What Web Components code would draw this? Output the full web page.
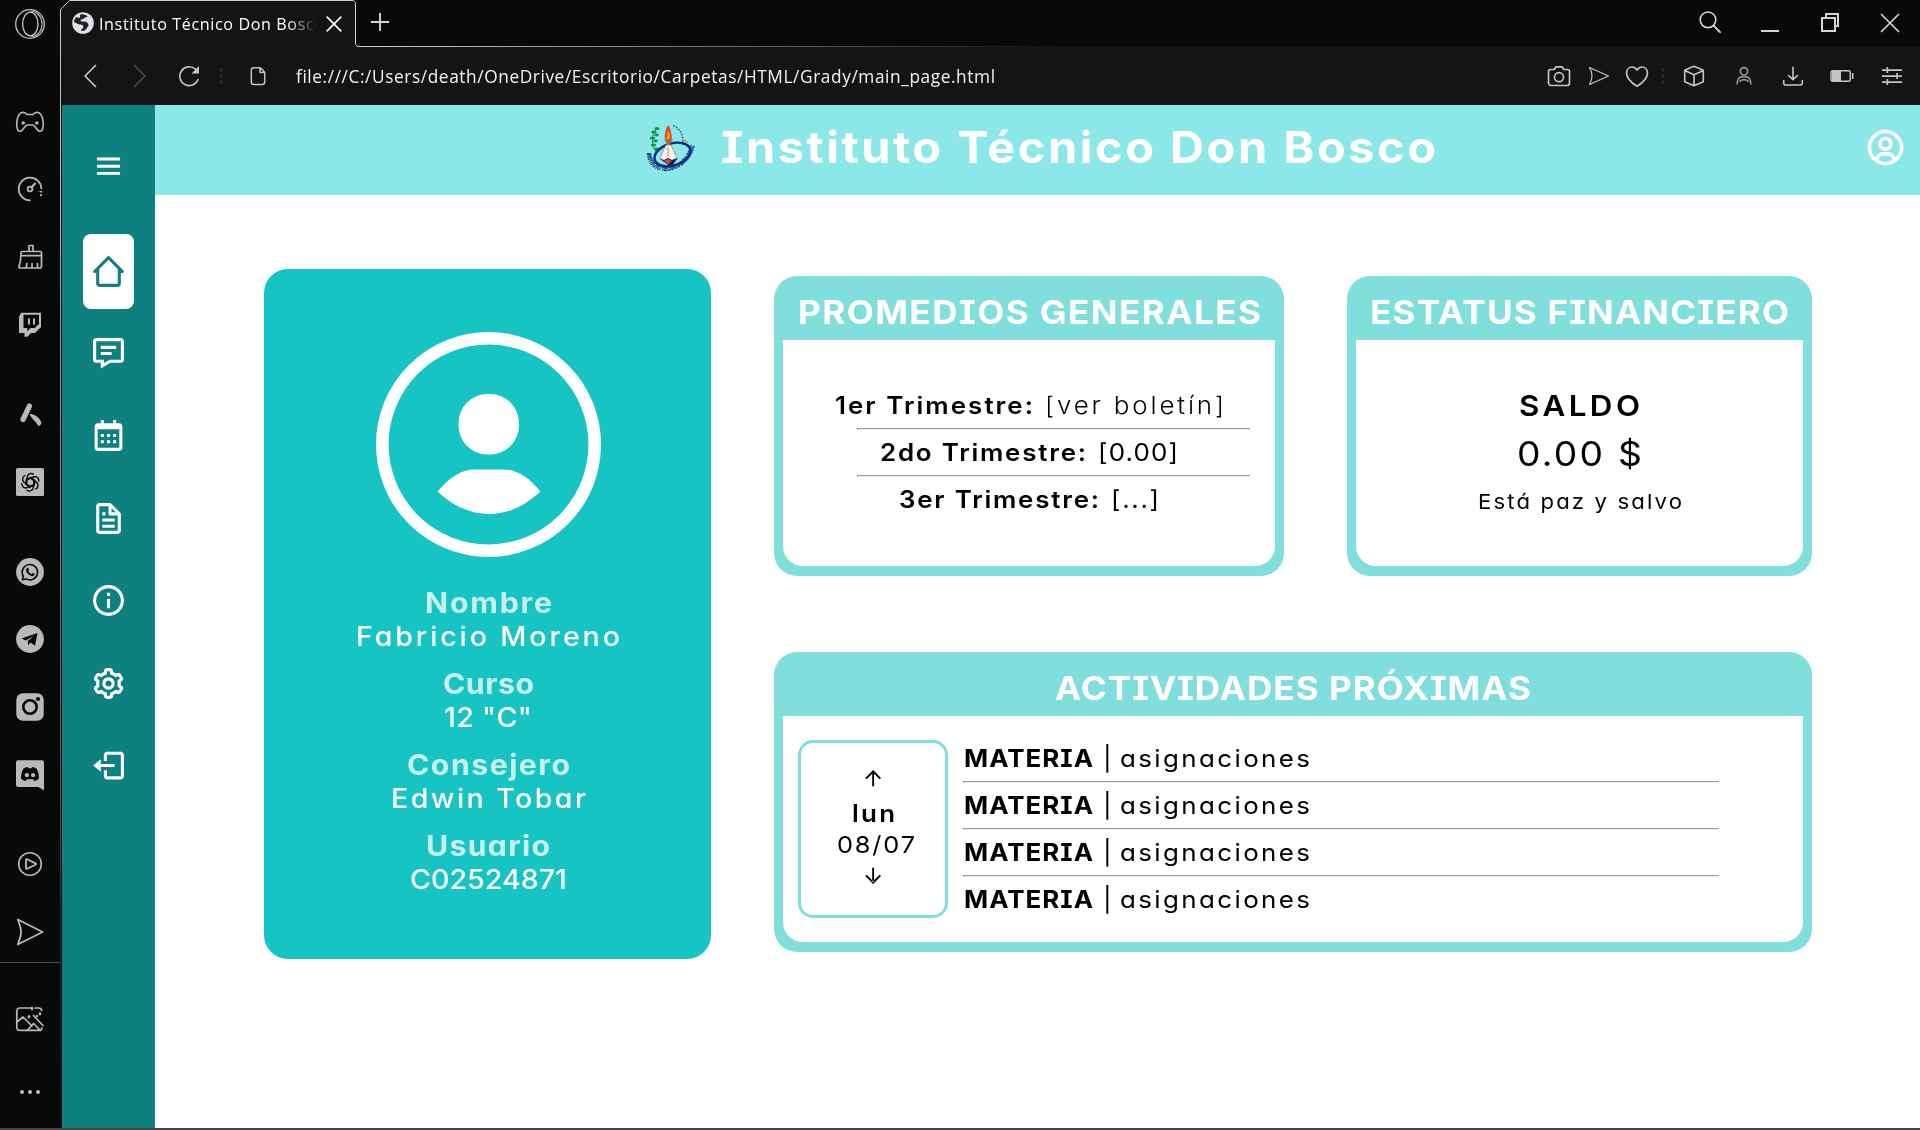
<!DOCTYPE html>
<html lang="es">
<head>
<meta charset="utf-8">
<title>Instituto Técnico Don Bosco</title>
<style>
html,body{margin:0;height:100%;overflow:hidden;background:#fff;font-family:Inter,"Open Sans",sans-serif}
</style>
</head>
<body>
<browser-window>
  <app-shell>
    <profile-card></profile-card>
    <info-card class="avg" heading="PROMEDIOS GENERALES" hw="463"><grade-list></grade-list></info-card>
    <info-card class="fin" heading="ESTATUS FINANCIERO" hw="419"><balance-box></balance-box></info-card>
    <info-card class="act" heading="ACTIVIDADES PRÓXIMAS" hw="476"><activity-board></activity-board></info-card>
  </app-shell>
</browser-window>
<script>
const G = '#c4c4c4', B = '#090909';
const line = (d, w = 1.6, c = 'currentColor') => `<path d="${d}" fill="none" stroke="${c}" stroke-width="${w}" stroke-linejoin="round" stroke-linecap="round"/>`;
const fill = (d, c = 'currentColor') => `<path d="${d}" fill="${c}"/>`;
const petal = Array.from({length: 6}, (_, i) => `<path transform="rotate(${i * 60 + 8} 16 16)" d="M12.3 13.6V10.4A3.9 3.9 0 0 1 18.4 7.9M12.3 13.6L16 11.8L20.2 14.2V19" fill="none" stroke="${B}" stroke-width="1.4"/>`).join('');

/* name: [grid size, markup] */
const ICONS = {
  opera: [32, `<circle cx="16" cy="16" r="14.3" fill="none" stroke="${G}" stroke-width="1.3"/><ellipse cx="16.3" cy="16" rx="7.7" ry="11.8" fill="none" stroke="${G}" stroke-width="1.3"/><path d="M16.5 4.2C20.5 1.8 28 7.500 28 16s-7.500 14.200-11.500 11.800" fill="none" stroke="${G}" stroke-width="1.1"/>`],
  gamepad: [32, line('M7 6.800C9 6 11.500 6.300 13 8.500h6C20.500 6.300 23 6 25 6.800 27.500 8 29.300 13 29.300 18c0 4.500-1 7.500-3.300 7.300-3.300 0-4.500-6.300-7.500-6.300h-5C10.500 19 9.300 25.300 6 25.300 3.700 25.500 2.700 22.500 2.700 18 2.700 13 4.500 8 7 6.800Z') + '<circle cx="9.200" cy="17" r="1.800" fill="currentColor"/><circle cx="22.800" cy="17" r="1.800" fill="currentColor"/>'],
  gauge: [32, line('M16 27.300A11.300 11.300 0 1 1 27.300 15.500', 1.700) + line('M17.500 14.500L21 10.500', 2) + '<circle cx="16" cy="16" r="2.400" fill="none" stroke="currentColor" stroke-width="1.700"/>' + fill('M26 18h2v1.600h-2zM26 21.300h2v1.600h-2zM24.500 18h1v1h-1z')],
  broom: [32, line('M15 10V4.500h4V10M8 10.500h18.500a1 1 0 0 1 1 1V25a2 2 0 0 1-2 2H6.200c-1 0-1.500-.5-1.200-1.500 1.500-4 2-9 2-14a1 1 0 0 1 1-1ZM7.500 14.700h19.500M12 26.500l1-4M18 26.500v-4M23.500 26.500v-4', 1.700)],
  twitch: [32, fill('M7 4.700h20V19l-6 6h-4l-3.500 3.800h-3V25H5V9zM9.500 6.700V20h3.800v3.200l3.200-3.200h4.200l4.300-4V6.700z') + fill('M14 10.500h2v6h-2zM19 10.500h2v6h-2z')],
  aria: [32, line('M15.500 8L9 21.500', 5.200) + fill('M15.500 16c4 0 10 2.500 11.800 8.500.3 1.500-1.500 3.500-3 3.500C22 23 17.500 21 15.500 16Z')],
  openai: [32, `<rect x="2" y="2" width="28" height="28" rx="1.500" fill="currentColor"/><g transform="translate(.3 .3)">${petal}</g>`],
  whatsapp: [32, '<circle cx="16" cy="16" r="13.900" fill="currentColor"/>' + line('M8.300 23.800l1-3.600a7.700 7.700 0 1 1 2.800 2.700z', 1.500, B) + fill('M13.200 12c.6-.5 1-.3 1.300.4l.6 1.400-.8 1.100c.8 1.500 1.700 2.300 3.200 3l1.100-1 1.800.9c.4.300.300.800 0 1.300-.8 1.200-2.200 1.300-4 .5-2.200-1-3.500-2.500-4.200-4.400-.4-1.400 0-2.400 1-3.200z', B)],
  telegram: [32, '<circle cx="16" cy="16" r="13.900" fill="currentColor"/>' + fill('M7.500 15.500L23.500 10 21 22.800l-4.500-3.200-2.300 2.600-.4-4.200 6.500-5.600-8.500 5z', B)],
  instagram: [32, `<rect x="2.300" y="2.300" width="27.400" height="27.400" rx="6.500" fill="currentColor"/><circle cx="16" cy="16" r="6.700" fill="none" stroke="${B}" stroke-width="2.600"/><circle cx="24" cy="8" r="2.100" fill="${B}"/>`],
  discord: [32, fill('M4 1.200h24a2 2 0 0 1 2 2V31.500l-5.500-3.500H4a2 2 0 0 1-2-2V3.200a2 2 0 0 1 2-2z') + fill('M7 19.500c0-4 1-7.500 2.300-9.800 1.600-1 3-1.500 4.400-1.600l.8 1.200h3l.8-1.200c1.400.1 2.800.6 4.400 1.600C24 12 25 15.500 25 19.500c-1.500 1.600-3.200 2.300-4.800 2.500l-1-1.700h-6.400l-1 1.700c-1.600-.2-3.300-.9-4.800-2.500z', B) + '<circle cx="12.900" cy="16.200" r="2.100" fill="currentColor"/><circle cx="19.100" cy="16.200" r="2.100" fill="currentColor"/>'],
  play: [32, '<circle cx="16" cy="16" r="11.300" fill="none" stroke="currentColor" stroke-width="1.600"/>' + line('M12 11.800v8.400c0 .6.500.8 1 .6l8.500-4.100c.6-.3.6-1 0-1.300L13 11.200c-.5-.2-1 0-1 .6Z', 1.800)],
  flow: [32, line('M3.800 3.500L28.500 16 3.800 28.500C6 23 7 19.500 7 16S6 9 3.800 3.500Z', 1.800)],
  picture: [32, line('M17 5H5.500A2.700 2.700 0 0 0 2.800 7.700v17a2.700 2.700 0 0 0 2.700 2.700h19.800a2.500 2.500 0 0 0 2.500-2.500M3 19l6-5 9 9M13.500 27l6-6.500 5.500 5.500M21 5h3.500c1.800 0 3 1 3.200 2.500M19.500 12.500L29 22.500', 1.700) + fill('M18 3l1.500 2.500L18 8l-1.500-2.500zM15 11.500l1.500 2.200-1.500 2.200-1.500-2.200zM26 8.500l1.500 2.200L26 13l-1.500-2.300zM22 12h2v2h-2z')],
  dots: [32, '<circle cx="8" cy="16" r="2.100" fill="currentColor"/><circle cx="16" cy="16" r="2.100" fill="currentColor"/><circle cx="24" cy="16" r="2.100" fill="currentColor"/>'],

  back: [24, line('M17.500 1.500L7 12l10.500 10.500', 1.700)],
  forward: [24, line('M6.500 1.500L17 12 6.500 22.500', 1.700)],
  reload: [24, line('M21 15.500A9.400 9.400 0 1 1 18.500 5.200', 1.600) + fill('M22 2v7.500h-7.500z')],
  sep: [24, fill('M10.500 4.500h3v3h-3zM10.500 10.500h3v3h-3zM10.500 16.500h3v3h-3z', '#2b2b2b')],
  file: [24, line('M7.500 3.800h6.700l4.500 4.500v9.700a2.500 2.500 0 0 1-2.500 2.500H7.500A2.500 2.500 0 0 1 5.300 18V6.300a2.500 2.500 0 0 1 2.200-2.500ZM14 4v4.500h4.500', 1.500)],
  camera: [24, line('M3.500 5.500h3.700L9 2.800h6l1.800 2.700h3.700a2 2 0 0 1 2 2V19a2.500 2.500 0 0 1-2.500 2.500H4A2.500 2.500 0 0 1 1.500 19V7.500a2 2 0 0 1 2-2Z', 1.700) + '<circle cx="12" cy="13.200" r="4.500" fill="none" stroke="currentColor" stroke-width="1.700"/>'],
  send: [24, line('M2.500 3.500L21.500 12 2.500 20.500C6 14.500 6 9.500 2.500 3.500Z', 1.200)],
  heart: [24, line('M12 22.300C6 18.500 1.600 14 1.600 9.200 1.600 5.500 4 3 7 3c2.300 0 4 1.300 5 3 1-1.700 2.700-3 5-3 3 0 5.400 2.500 5.400 6.200 0 4.800-4.400 9.300-10.400 13.100Z', 1.700)],
  cube: [24, line('M12 2.300l9.300 3.900v11.600L12 21.700l-9.300-3.900V6.200zM2.700 6.500L12 10.700l9.300-4.200M12 10.700v11', 1.600)],
  person: [24, '<circle cx="12" cy="7.300" r="3.700" fill="none" stroke="#9a9a9a" stroke-width="1.600"/>' + line('M5.200 20c0-4.700 2.300-7.500 4.800-7.300 1.300.3 2.700.3 4 0 2.500-.2 4.800 2.600 4.800 7.300M8 17.500c.5-1.300 1.500-1.800 4-1.800s3.500.5 4 1.800', 1.500, '#9a9a9a')],
  download: [24, line('M12 3.200v12.300M7.500 11.500l4.500 4.200 4.500-4.200M2.700 16.500v2.200c0 1.300.8 2.300 2 2.300h14.600c1.200 0 2-1 2-2.300v-2.200', 1.600)],
  battery: [24, line('M3 6.800h15.300a2 2 0 0 1 2 2v6.400a2 2 0 0 1-2 2H3a2 2 0 0 1-2-2V8.800a2 2 0 0 1 2-2Z', 1.500) + fill('M2 6.500h9v11H2zM22 9h1.500v6H22z')],
  sliders: [24, fill('M2 5.200h20v1.700H2zM2 11.200h20v1.700H2zM2 17.200h20v1.700H2zM6.500 3h1.700v6H6.500zM16.200 9h1.700v6h-1.700zM6.500 15h1.700v6H6.500z')],
  search: [24, '<circle cx="10" cy="9.800" r="7.800" fill="none" stroke="currentColor" stroke-width="1.600"/>' + line('M15.600 15.600l6.400 6.600', 1.900)],
  minimize: [24, fill('M3 19h18v2H3z')],
  restore: [24, '<path d="M4 7h13v13H4zM8 7V3h12v12h-3" fill="none" stroke="currentColor" stroke-width="2"/>'],
  close: [24, line('M3.500 3.500l17 17M20.500 3.500l-17 17', 1.700)],
  tabclose: [24, line('M5.200 5.200l13.600 13.600M18.800 5.200L5.200 18.800', 1.700)],
  plus: [24, fill('M3 10.100h18v1.900H3zM11.100 2h1.900v18h-1.900z')],
  globe: [24, '<circle cx="12" cy="12" r="10.800" fill="#dfe1e5"/>' + fill('M9.500 3.500c2.500-.8 5 .2 7.500 2-1.500.6-3 .6-3.800 1.800-.9 1.200-3 .7-3.700 2-.4 1 1.800 1.600 4 1.300 2.600 0 3.600 1.900 4.200 3.900-1.700 1.500-2.200 4.500-4.700 5.200-2 .3-3.200.3-3-.7 1.200-1.300 3-2.400 2.400-4-1-1.700-4.400-1-6.100-2.200C4.800 11.700 3.500 11.300 2.800 11c.2-1.800 1.400-3.800 2.800-5 1.200.3 2.200 1.700 3.200.6.600-.8-.3-2.100.7-3.100z', '#202124')],

  menu: [24, fill('M4.500 6.200h15v1.900h-15zM4.500 10.900h15v1.900h-15zM4.500 15.500h15v1.900h-15z')],
  home: [24, fill('M3 13h1v7c0 1.103.897 2 2 2h12c1.103 0 2-.897 2-2v-7h1a1 1 0 0 0 .707-1.707l-9-9a.999.999 0 0 0-1.414 0l-9 9A1 1 0 0 0 3 13zm9-8.586 6 6V15l.001 5H6v-9.585l6-6.001z')],
  chat: [24, fill('M20 2H4c-1.103 0-2 .897-2 2v12c0 1.103.897 2 2 2h3v3.767L13.277 18H20c1.103 0 2-.897 2-2V4c0-1.103-.897-2-2-2zm0 14h-7.277L9 18.233V16H4V4h16v12z') + fill('M7 7h10v2H7zm0 4h7v2H7z')],
  calendar: [24, fill('M7 11h2v2H7zm0 4h2v2H7zm4-4h2v2h-2zm0 4h2v2h-2zm4-4h2v2h-2zm0 4h2v2h-2z') + fill('M5 22h14c1.103 0 2-.897 2-2V6c0-1.103-.897-2-2-2h-2V2h-2v2H9V2H7v2H5c-1.103 0-2 .897-2 2v14c0 1.103.897 2 2 2zM19 8l.001 12H5V8h14z')],
  doc: [24, fill('M19.903 8.586a.997.997 0 0 0-.196-.293l-6-6a.997.997 0 0 0-.293-.196c-.03-.014-.062-.022-.094-.033a.991.991 0 0 0-.259-.051C13.040 2.011 13.021 2 13 2H6c-1.103 0-2 .897-2 2v16c0 1.103.897 2 2 2h12c1.103 0 2-.897 2-2V9c0-.021-.011-.04-.013-.062a.952.952 0 0 0-.051-.259c-.01-.032-.019-.063-.033-.093zM16.586 8H14V5.414L16.586 8zM6 20V4h6v5a1 1 0 0 0 1 1h5l.002 10H6z') + fill('M8 12h8v2H8zm0 4h8v2H8zm0-8h2v2H8z')],
  info: [24, fill('M12 2C6.486 2 2 6.486 2 12s4.486 10 10 10 10-4.486 10-10S17.514 2 12 2zm0 18c-4.411 0-8-3.589-8-8s3.589-8 8-8 8 3.589 8 8-3.589 8-8 8z') + fill('M11 11h2v6h-2zm0-4h2v2h-2z')],
  cog: [24, fill('M12 16c2.206 0 4-1.794 4-4s-1.794-4-4-4-4 1.794-4 4 1.794 4 4 4zm0-6c1.084 0 2 .916 2 2s-.916 2-2 2-2-.916-2-2 .916-2 2-2z') + fill('m2.845 16.136 1 1.730c.531.917 1.809 1.261 2.730.730l.529-.306A8.100 8.100 0 0 0 9 19.402V20c0 1.103.897 2 2 2h2c1.103 0 2-.897 2-2v-.598a8.132 8.132 0 0 0 1.896-1.111l.529.306c.923.530 2.198.188 2.731-.731l.999-1.729a2.001 2.001 0 0 0-.731-2.732l-.505-.292a7.718 7.718 0 0 0 0-2.224l.505-.292a2.002 2.002 0 0 0 .731-2.732l-.999-1.729c-.531-.92-1.808-1.265-2.731-.732l-.529.306A8.100 8.100 0 0 0 15 4.598V4c0-1.103-.897-2-2-2h-2c-1.103 0-2 .897-2 2v.598a8.132 8.132 0 0 0-1.896 1.111l-.529-.306c-.924-.531-2.200-.187-2.731.732l-.999 1.729a2.001 2.001 0 0 0 .731 2.732l.505.292a7.683 7.683 0 0 0 0 2.223l-.505.292a2.003 2.003 0 0 0-.731 2.733zm3.326-2.758A5.703 5.703 0 0 1 6 12c0-.462.058-.926.170-1.378a.999.999 0 0 0-.470-1.108l-1.123-.650.998-1.729 1.145.662a.997.997 0 0 0 1.188-.142 6.071 6.071 0 0 1 2.384-1.399A1 1 0 0 0 11 5.300V4h2v1.300a1 1 0 0 0 .708.956 6.083 6.083 0 0 1 2.384 1.399.999.999 0 0 0 1.188.142l1.144-.661 1 1.729-1.124.649a1 1 0 0 0-.470 1.108c.112.452.170.916.170 1.378 0 .461-.058.925-.171 1.378a1 1 0 0 0 .471 1.108l1.123.649-.998 1.729-1.145-.661a.996.996 0 0 0-1.188.142 6.071 6.071 0 0 1-2.384 1.399A1 1 0 0 0 13 18.700l.002 1.300H11v-1.300a1 1 0 0 0-.708-.956 6.083 6.083 0 0 1-2.384-1.399.992.992 0 0 0-1.188-.141l-1.144.662-1-1.729 1.124-.651a1 1 0 0 0 .471-1.108z')],
  logout: [24, fill('m2 12 5 4v-3h9v-2H7V8z') + fill('M20 3H11c-1.103 0-2 .897-2 2v4h2V5h9v14h-9v-4H9v4c0 1.103.897 2 2 2h9c1.103 0 2-.897 2-2V5c0-1.103-.897-2-2-2z')],
  user: [24, fill('M12 2A10.130 10.130 0 0 0 2 12a10 10 0 0 0 4 7.920V20h.100a9.700 9.700 0 0 0 11.800 0h.100v-.080A10 10 0 0 0 22 12 10.130 10.130 0 0 0 12 2zM8.070 18.930A3 3 0 0 1 11 16.570h2a3 3 0 0 1 2.930 2.360 7.750 7.750 0 0 1-7.860 0zm9.540-1.290A5 5 0 0 0 13 14.570h-2a5 5 0 0 0-4.610 3.070A8 8 0 0 1 4 12a8.100 8.100 0 0 1 8-8 8.100 8.100 0 0 1 8 8 8 8 0 0 1-2.390 5.640z') + fill('M12 6a3.910 3.910 0 0 0-4 4 3.910 3.910 0 0 0 4 4 3.910 3.910 0 0 0 4-4 3.910 3.910 0 0 0-4-4zm0 6a1.910 1.910 0 0 1-2-2 1.910 1.910 0 0 1 2-2 1.910 1.910 0 0 1 2 2 1.910 1.910 0 0 1-2 2z')],
  avatar: [225, '<circle cx="112.500" cy="112.500" r="106.200" fill="none" stroke="currentColor" stroke-width="12.600"/><rect x="82.500" y="62" width="60.500" height="60.500" rx="29" fill="currentColor"/>' + fill('M62.500 158.500C74 145 86 137.500 98 137.500h30c12 0 25 7.500 35.500 21q.8 1 0 2C148 174.500 131 182 113 182s-35-7.500-50.500-21.500q-.8-1 0-2z')],
  up: [24, fill('M11.200 6.300v13.900h1.900V6.300zM4.300 11.900l1.400 1.400L12.150 6.700l6.450 6.600 1.400-1.400-7.850-8z')],
  down: [24, fill('M11.200 3.800v13.900h1.900V3.800zM4.300 12.100l1.400-1.400 6.450 6.600 6.450-6.600 1.400 1.400-7.850 8z')]
};

function define(name, html, setup) {
  const tpl = document.createElement('template');
  customElements.define(name, class extends HTMLElement {
    connectedCallback() {
      if (this.shadowRoot) return;
      const root = this.attachShadow({mode: 'open'});
      tpl.innerHTML = typeof html === 'function' ? html(this) : html;
      root.appendChild(tpl.content.cloneNode(true));
      if (setup) setup(this, root);
    }
  });
}

/* Text line that spreads its letters to a given width (w) at a given size */
define('fit-text', `<style>
  :host{display:block;flex:none;white-space:pre}
  span{display:inline-block;transform-origin:0 50%;font-feature-settings:"cv11","cv08","cv10";font-kerning:normal}
</style><span><slot></slot></span>`, (el, root) => {
  const span = root.querySelector('span'), a = n => el.getAttribute(n);
  const w = +a('w'), sx = +(a('sx') || 1.08);
  el.style.fontSize = a('size') + 'px';
  el.style.fontWeight = a('weight') || 400;
  el.style.lineHeight = el.style.height = (a('h') || 30) + 'px';
  const n = el.textContent.length;
  const ls = n > 1 ? (w / sx - span.getBoundingClientRect().width) / (n - 1) : 0;
  span.style.letterSpacing = ls + 'px';
  span.style.transform = `scaleX(${sx})`;
  el.style.width = w + 'px';
});

define('ui-icon', el => {
  const [grid, body] = ICONS[el.getAttribute('name')], s = el.getAttribute('size') || grid;
  return `<style>:host{display:block;flex:none;width:${s}px;height:${s}px}svg{display:block}</style>
    <svg width="${s}" height="${s}" viewBox="0 0 ${grid} ${grid}">${body}</svg>`;
});

define('side-dock', () => {
  const rows = [['opera', 8], ['gamepad', 66], ['gauge', 35], ['broom', 36], ['twitch', 35], ['aria', 58], ['openai', 36], ['whatsapp', 58],
    ['telegram', 35], ['instagram', 36], ['discord', 36], ['play', 57], ['flow', 36]];
  return `<style>
    :host{display:flex;flex-direction:column;align-items:center;width:60px;background:#090909;color:#b9b9b9;height:100%}
    hr{width:60px;height:1px;border:0;background:#4c4c4c;margin:14px 0 0}
  </style>${rows.map(([n, m]) => `<ui-icon name="${n}" style="margin-top:${m}px"></ui-icon>`).join('')}
  <hr><ui-icon name="picture" style="margin-top:40px"></ui-icon><ui-icon name="dots" style="margin-top:41px"></ui-icon>`;
});

define('tab-strip', `<style>
  :host{display:flex;height:47px;background:#090909;color:#d4d4d4}
  .tab{display:flex;align-items:center;width:294px;height:47px;background:#141414;clip-path:polygon(9px 0,100% 0,100% 100%,0 100%,0 9px);font-family:"Open Sans",sans-serif;color:#fff}
  .tab .t{width:217px;margin-left:4px;overflow:hidden;-webkit-mask-image:linear-gradient(90deg,#000 188px,transparent 218px);mask-image:linear-gradient(90deg,#000 188px,transparent 218px)}
  .win{margin-left:auto;display:flex;gap:36px;padding:11px 18px 0 0}
</style>
<div class="tab"><ui-icon name="globe" style="margin:0 0 1px 10px"></ui-icon><div class="t"><fit-text w="225" size="17" sx="0.95" h="30">Instituto Técnico Don Bosco</fit-text></div><ui-icon name="tabclose" style="margin-left:6px;margin-top:1px"></ui-icon></div>
<ui-icon name="plus" style="margin:11px 0 0 13px"></ui-icon>
<div class="win"><ui-icon name="search" style="margin-top:-1px"></ui-icon><ui-icon name="minimize"></ui-icon><ui-icon name="restore"></ui-icon><ui-icon name="close"></ui-icon></div>`);

define('tool-bar', () => {
  const left = [['back', 16, '#c4c4c4'], ['forward', 26, '#4a4a4a'], ['reload', 25], ['sep', 7.5], ['file', 13.5]];
  const right = [['camera', 0], ['send', 16], ['heart', 14], ['sep', 1.5], ['cube', 7.5], ['person', 25.5], ['download', 25.5], ['battery', 25], ['sliders', 26]];
  const draw = l => l.map(([n, m, c]) => `<ui-icon name="${n}" style="margin-left:${m}px${c ? ';color:' + c : ''}"></ui-icon>`).join('');
  return `<style>
    :host{display:flex;align-items:center;height:58px;padding-left:1px;background:#141414;color:#c4c4c4;font-family:"Open Sans",sans-serif}
    .r{display:flex;margin-left:auto;padding-right:16px}
    fit-text{margin-left:26px;color:#f2f2f2}
  </style>${draw(left)}<fit-text w="699" size="18" sx="0.96" h="30">file:///C:/Users/death/OneDrive/Escritorio/Carpetas/HTML/Grady/main_page.html</fit-text><div class="r">${draw(right)}</div>`;
});

define('browser-window', `<style>
  :host{display:grid;grid-template:1fr 2px / 61px 1fr;width:100%;height:1130px;position:relative;background:#090909}
  .main{display:flex;flex-direction:column;min-width:0}
  .page{flex:1;display:flex;margin-left:1px;min-height:0}
  .edge{grid-column:1 / 3;background:#474343}
  .outline{position:absolute;left:0;top:0;pointer-events:none}
</style>
<side-dock></side-dock>
<div class="main"><tab-strip></tab-strip><tool-bar></tool-bar><div class="page"><slot></slot></div></div>
<div class="edge"></div>
<svg class="outline" width="1920" height="1128" fill="none">
  <defs><linearGradient id="v" x1="0" y1="0" x2="0" y2="1128" gradientUnits="userSpaceOnUse"><stop offset="0" stop-color="#d0d0d0"/><stop offset=".5" stop-color="#7a7a7a"/><stop offset="1" stop-color="#090909"/></linearGradient>
  <linearGradient id="h" x1="356" y1="0" x2="1060" y2="0" gradientUnits="userSpaceOnUse"><stop offset="0" stop-color="#d0d0d0"/><stop offset="1" stop-color="#101010"/></linearGradient></defs>
  <path d="M60.500 1128V9.500L69.500 .5" stroke="url(#v)"/>
  <path d="M69.500 .5H353.500L355.500 2.500V44.500L357.500 46.500" stroke="#d0d0d0"/>
  <rect x="357" y="46" width="703" height="1" fill="url(#h)"/>
</svg>`);

define('nav-rail', () => {
  const items = ['chat', 'calendar', 'doc', 'info', 'cog', 'logout'];
  return `<style>
    :host{display:flex;flex-direction:column;align-items:center;width:93px;flex:none;background:#0e8080;color:#fff}
    .active{display:flex;align-items:center;justify-content:center;width:51px;height:75px;margin:49px 0 25.500px;border-radius:8px;background:#fff;color:#0e8080}
    .list{display:flex;flex-direction:column;gap:45.500px}
  </style><ui-icon name="menu" size="37" style="margin-top:43px"></ui-icon>
  <div class="active"><ui-icon name="home" size="37"></ui-icon></div>
  <div class="list">${items.map(n => `<ui-icon name="${n}" size="37"></ui-icon>`).join('')}</div>`;
});

define('school-crest', `<style>:host{display:block;width:66px;height:66px}svg{display:block}</style>
<svg width="66" height="66" viewBox="0 0 66 66">
  <path d="M19 12C13 19 13 29 18 36" fill="none" stroke="#1d8a4a" stroke-width="1"/>
  <g fill="#159447"><ellipse cx="19" cy="12.500" rx="2.600" ry="1.500"/><ellipse cx="16" cy="16" rx="2.700" ry="1.500"/><ellipse cx="18.500" cy="19" rx="2.300" ry="1.400"/><ellipse cx="14.500" cy="22" rx="2.700" ry="1.500"/><ellipse cx="17.500" cy="25" rx="2.300" ry="1.400"/><ellipse cx="15.500" cy="29" rx="2.700" ry="1.500"/><ellipse cx="19" cy="33" rx="2.800" ry="1.600"/></g>
  <path d="M35 9.500C42 12 46 20 45 29" fill="none" stroke="#51606a" stroke-width="1.400" stroke-dasharray="2 1"/>
  <path d="M45 26c2-2 4-1.500 5 1" fill="none" stroke="#cf8e7f" stroke-width="1.300"/>
  <ellipse cx="34.500" cy="38.500" rx="18.500" ry="11" transform="rotate(-17 34.500 38.500)" fill="none" stroke="#062b85" stroke-width="2.400"/>
  <path d="M30 9l2 3 2 9-1 3h-5l-1.500-3L28 13z" fill="#ee4323"/><path d="M30 15l2 5-1 3h-2z" fill="#ffb92e"/>
  <path d="M26 23.500h9l-2.500 3v5h-4v-5z" fill="#9a6a3a"/>
  <path d="M28 29h5l6 13-6 3-3-2-5 3-3-4z" fill="#f4f1ea" stroke="#8c8577" stroke-width=".7"/><path d="M30 31v10" stroke="#cf8e5f"/>
  <path d="M21 42l5 2 4-2 4 2 6-2-7 9z" fill="#12234f"/><path d="M26 45l4-2 4 2-4 3z" fill="#dc4430"/>
  <path id="arc" d="M9 37C9 64 51 60 57 28" fill="none"/>
  <text font-family="Liberation Sans,sans-serif" font-size="6" font-weight="700" font-style="italic" fill="#0a2d86" stroke="#0a2d86" stroke-width=".3"><textPath href="#arc" textLength="74" lengthAdjust="spacingAndGlyphs">INSTITUTO TECNICO DON BOSCO</textPath></text>
</svg>`);

define('app-header', `<style>
  :host{display:flex;align-items:center;height:90px;background:#8ce8e8;color:#fff;padding:0 13px 0 483px}
  fit-text{margin:0 0 7px 17px}
  ui-icon{margin:-5px 0 0 auto}
</style><school-crest style="margin-top:-2px"></school-crest><fit-text w="715" size="43.500" weight="700" h="60">Instituto Técnico Don Bosco</fit-text><ui-icon name="user" size="43"></ui-icon>`);

define('app-shell', `<style>
  :host{display:flex;flex:1;background:#fff}
  .col{flex:1;display:flex;flex-direction:column;min-width:0}
  main{display:grid;grid-template:"p a f" 300px "p c c" 300px / 447px 510px 465px;column-gap:63px;row-gap:76px;padding:81px 0 0 109px;align-items:start}
  ::slotted(profile-card){grid-area:p;margin-top:-7px}
  ::slotted(.fin){grid-area:f}
  ::slotted(.act){grid-area:c}
</style><nav-rail></nav-rail><div class="col"><app-header></app-header><main><slot></slot></main></div>`);

define('profile-card', () => {
  const d = [['Nombre', 127, 'Fabricio Moreno', 264], ['Curso', 91, '12 "C"', 88], ['Consejero', 163, 'Edwin Tobar', 195], ['Usuario', 124, 'C02524871', 157]];
  return `<style>
    :host{display:flex;flex-direction:column;align-items:center;box-sizing:border-box;width:447px;height:690px;padding:63px 0 0 1px;border-radius:24px;background:#17c4c4;color:#fff}
    .list{display:flex;flex-direction:column;gap:15px;margin-top:30px}
    .f{display:flex;flex-direction:column;align-items:center}
    .k{color:#c9efed}
  </style><ui-icon name="avatar"></ui-icon><div class="list">${d.map(([k, kw, v, vw]) =>
    `<div class="f"><fit-text class="k" w="${kw}" size="28" weight="700" h="33">${k}</fit-text><fit-text w="${vw}" size="26.500" weight="500" h="33">${v}</fit-text></div>`).join('')}</div>`;
});

define('info-card', el => `<style>
  :host{display:flex;flex-direction:column;box-sizing:border-box;height:300px;padding:0 9px 10px;border-radius:23px;background:#80dedd}
  header{display:flex;justify-content:center;padding-top:10px;height:54px;align-items:center;color:#fff}
  .body{flex:1;background:#fff;border-radius:0 0 20px 20px}
</style><header><fit-text w="${el.getAttribute('hw')}" size="32.500" weight="700" h="54">${el.getAttribute('heading')}</fit-text></header><div class="body"><slot></slot></div>`);

define('grade-list', `<style>
  :host{display:flex;flex-direction:column;padding-top:43px;color:#000}
  .r{display:flex;justify-content:center;gap:12px}
  hr{box-sizing:border-box;width:393px;height:2px;margin:0 0 0 74px;border:0;border-top:1px solid #9a9a9a;border-left:1px solid #9a9a9a;background:#eee}
</style>
<div class="r"><fit-text w="198" size="24" weight="600" h="45">1er Trimestre:</fit-text><fit-text w="179" size="24" weight="300" h="45">[ver boletín]</fit-text></div><hr>
<div class="r"><fit-text w="206" size="24" weight="600" h="45">2do Trimestre:</fit-text><fit-text w="80" size="24" h="45">[0.00]</fit-text></div><hr>
<div class="r"><fit-text w="200" size="24" weight="600" h="45">3er Trimestre:</fit-text><fit-text w="48" size="24" h="45">[...]</fit-text></div>`);

define('balance-box', `<style>:host{display:flex;flex-direction:column;align-items:center;padding-top:42px;color:#000}</style>
<fit-text w="121" size="29" weight="600" h="48">SALDO</fit-text>
<fit-text w="125" size="34.500" h="48">0.00 $</fit-text>
<fit-text w="204" size="20.500" h="48">Está paz y salvo</fit-text>`);

define('day-picker', `<style>
  :host{display:flex;flex-direction:column;align-items:center;box-sizing:border-box;width:150px;height:178px;border:3px solid #80dedd;border-radius:15px;padding-top:19px;color:#000}
</style><ui-icon name="up" style="margin:4px 0 3px"></ui-icon><fit-text w="43" size="24" weight="600" h="30" style="margin-top:6px">lun</fit-text><fit-text w="78" size="23.500" h="31" style="margin-left:6px">08/07</fit-text><ui-icon name="down" style="margin-top:4px"></ui-icon>`);

define('activity-row', `<style>:host{display:flex}</style>
<fit-text w="129" size="24" weight="700" h="45">MATERIA</fit-text><fit-text w="6" size="24" h="45" style="margin-left:10px">|</fit-text><fit-text w="190" size="24" h="45" style="margin-left:11px">asignaciones</fit-text>`);

define('activity-board', () => {
  const row = '<activity-row></activity-row>';
  return `<style>
    :host{display:flex;gap:15px;padding-left:15px}
    day-picker{margin-top:24px}
    .rows{padding-top:20px;width:756px}
    activity-row{margin-left:1px}
    hr{box-sizing:border-box;height:2px;margin:0;border:0;border-top:1px solid #9a9a9a;border-left:1px solid #9a9a9a;background:#eee}
  </style><day-picker></day-picker><div class="rows">${[row, row, row, row].join('<hr>')}</div>`;
});
</script>
</body>
</html>
